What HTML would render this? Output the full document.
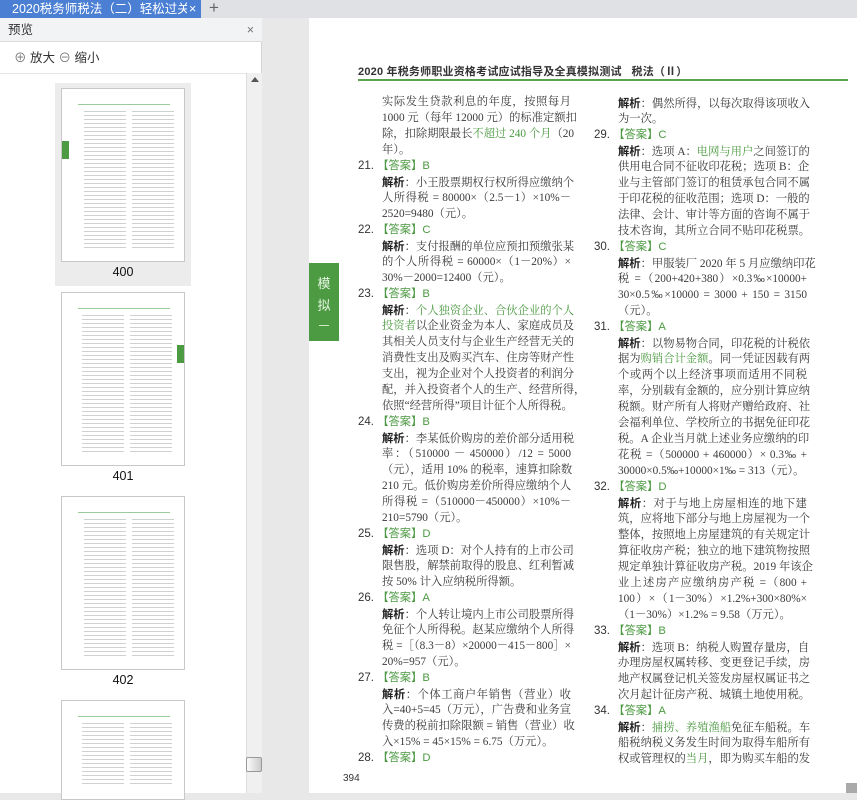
<!DOCTYPE html>
<html><head><meta charset="utf-8">
<style>
*{margin:0;padding:0;box-sizing:border-box}
body{width:857px;height:793px;overflow:hidden;position:relative;background:#e8e8e8;font-family:"Liberation Sans","Noto Sans CJK SC",sans-serif}
.abs{position:absolute}
#tabbar{left:0;top:0;width:857px;height:18px;background:#dfe1e5}
#tab{left:0;top:0;width:201px;height:18px;background:#4a7fd4;color:#fff;font-size:12.5px;line-height:18px;padding-left:12px;white-space:nowrap;overflow:hidden}
#side{left:0;top:18px;width:262px;height:775px;background:#fff;border-right:1px solid #d4d4d4}
#sh{left:0;top:0;width:262px;height:24px;background:#f2f3f5;border-bottom:1px solid #dcdcdc;font-size:12.5px;line-height:24px;padding-left:8px;color:#333}
#tb{left:0;top:24px;width:262px;height:32px;border-bottom:1px solid #e6e6e6;font-size:12.5px;color:#333;line-height:32px}
.sb{left:246px;top:73px;width:16px;height:720px;background:#f0f0f0;border-left:1px solid #ddd}
.thumb{position:absolute;left:61px;width:124px;height:174px;border:1px solid #c8c8c8;background:#fff}
.thumb .ln{position:absolute;left:16px;right:14px;top:14px;height:2px;border-bottom:1px solid #9c9;}
.thumb .c{position:absolute;top:20px;bottom:12px;width:42px;background:repeating-linear-gradient(#fff 0,#fff 2px,#d0d0d0 2px,#d0d0d0 3px,#fff 3px,#fff 4px)}
.lbl{position:absolute;left:55px;width:136px;text-align:center;font-size:12.5px;color:#111}
#page{left:309px;top:18px;width:548px;height:775px;background:#fff}
.col{position:absolute;top:94px;width:250px;font-family:"Liberation Serif","Noto Serif CJK SC",serif;font-size:11.3px;color:#3a3a3a;line-height:16px}
.col div{height:16px;white-space:nowrap}
.t{margin-left:24px;width:189px;text-align:justify;text-align-last:justify}
.s{margin-left:24px;text-align-last:auto}
.n{font-family:"Liberation Sans","Noto Sans CJK SC",sans-serif;font-size:11.5px;color:#333}
.a{color:#4c9a42;font-family:"Liberation Sans","Noto Sans CJK SC",sans-serif}
.g{color:#4c9a42}
b{font-family:"Noto Sans CJK SC",sans-serif;font-weight:bold;color:#222}
</style></head><body>
<div id="tabbar" class="abs"></div>
<div id="tab" class="abs">2020税务师税法（二）轻松过关 <span style="position:absolute;left:187px;top:0;background:#4a7fd4;padding-left:2px">×</span></div>
<div class="abs" style="left:209px;top:-2px;font-size:17px;color:#666">+</div>
<div id="side" class="abs">
 <div id="sh" class="abs">预览<span style="position:absolute;right:8px;color:#777">×</span></div>
 <div id="tb" class="abs"><span style="margin-left:14px;color:#777">⊕</span> 放大 <span style="color:#777">⊖</span> 缩小</div>
</div>
<div class="abs" style="left:55px;top:83px;width:136px;height:203px;background:#ececec"></div>
<div class="thumb" style="top:88px"><div class="ln"></div><div class="c" style="left:22px"></div><div class="c" style="left:70px"></div><div class="abs" style="left:0;top:52px;width:7px;height:18px;background:#4c9a42"></div></div>
<div class="lbl" style="top:265px">400</div>
<div class="thumb" style="top:292px"><div class="ln"></div><div class="c" style="left:20px"></div><div class="c" style="left:68px"></div><div class="abs" style="right:0;top:52px;width:7px;height:18px;background:#4c9a42"></div></div>
<div class="lbl" style="top:469px">401</div>
<div class="thumb" style="top:496px"><div class="ln"></div><div class="c" style="left:22px"></div><div class="c" style="left:70px"></div></div>
<div class="lbl" style="top:673px">402</div>
<div class="thumb" style="top:700px;height:100px"><div class="ln"></div><div class="c" style="left:20px"></div><div class="c" style="left:68px"></div></div>
<div class="abs sb"><div class="abs" style="left:4px;top:4px;border:4px solid transparent;border-bottom:5px solid #555;border-top:0"></div><div class="abs" style="left:-1px;top:684px;width:16px;height:15px;background:linear-gradient(90deg,#fafafa,#ccc);border:1px solid #999;border-radius:2px"></div></div>

<div id="page" class="abs"></div>
<div class="abs" style="left:358px;top:63px;font-size:11px;letter-spacing:0.2px;font-weight:bold;color:#333;white-space:nowrap">2020 年税务师职业资格考试应试指导及全真模拟测试&nbsp;&nbsp;&nbsp;税法（Ⅱ）</div>
<div class="abs" style="left:358px;top:79px;width:490px;height:2px;background:#5aa34d"></div>
<div class="abs" style="left:309px;top:263px;width:30px;height:78px;background:#4c9a42;color:#e8f5e4;font-size:13px;text-align:center;line-height:22px;padding-top:10px">模<br>拟<div style="height:1px;width:10px;background:#cfe8c8;margin:8px auto 0"></div></div>
<div class="abs" style="left:343px;top:773px;font-size:10px;color:#333">394</div>
<div class="abs" style="left:846px;top:783px;width:11px;height:10px;background:#aaa"></div>

<div class="col" style="left:358px">
<div class="t">实际发生贷款利息的年度，按照每月</div>
<div class="t">1000 元（每年 12000 元）的标准定额扣</div>
<div class="t">除，扣除期限最长<span class="g">不超过 240 个月</span>（20</div>
<div class="s">年）。</div>
<div><span class="n">21. </span><span class="a">【答案】B</span></div>
<div class="t"><b>解析</b>：小王股票期权行权所得应缴纳个</div>
<div class="t">人所得税 = 80000×（2.5－1）×10%－</div>
<div class="s">2520=9480（元）。</div>
<div><span class="n">22. </span><span class="a">【答案】C</span></div>
<div class="t"><b>解析</b>：支付报酬的单位应预扣预缴张某</div>
<div class="t">的个人所得税 = 60000×（1－20%）×</div>
<div class="s">30%－2000=12400（元）。</div>
<div><span class="n">23. </span><span class="a">【答案】B</span></div>
<div class="t"><b>解析</b>：<span class="g">个人独资企业、合伙企业的个人</span></div>
<div class="t"><span class="g">投资者</span>以企业资金为本人、家庭成员及</div>
<div class="t">其相关人员支付与企业生产经营无关的</div>
<div class="t">消费性支出及购买汽车、住房等财产性</div>
<div class="t">支出，视为企业对个人投资者的利润分</div>
<div class="t">配，并入投资者个人的生产、经营所得，</div>
<div class="t">依照“经营所得”项目计征个人所得税。</div>
<div><span class="n">24. </span><span class="a">【答案】B</span></div>
<div class="t"><b>解析</b>：李某低价购房的差价部分适用税</div>
<div class="t">率：（510000 － 450000）/12 = 5000</div>
<div class="t">（元），适用 10% 的税率，速算扣除数</div>
<div class="t">210 元。低价购房差价所得应缴纳个人</div>
<div class="t">所得税 =（510000－450000）×10%－</div>
<div class="s">210=5790（元）。</div>
<div><span class="n">25. </span><span class="a">【答案】D</span></div>
<div class="t"><b>解析</b>：选项 D：对个人持有的上市公司</div>
<div class="t">限售股，解禁前取得的股息、红利暂减</div>
<div class="s">按 50% 计入应纳税所得额。</div>
<div><span class="n">26. </span><span class="a">【答案】A</span></div>
<div class="t"><b>解析</b>：个人转让境内上市公司股票所得</div>
<div class="t">免征个人所得税。赵某应缴纳个人所得</div>
<div class="t">税 =［（8.3－8）×20000－415－800］×</div>
<div class="s">20%=957（元）。</div>
<div><span class="n">27. </span><span class="a">【答案】B</span></div>
<div class="t"><b>解析</b>：个体工商户年销售（营业）收</div>
<div class="t">入=40+5=45（万元），广告费和业务宣</div>
<div class="t">传费的税前扣除限额 = 销售（营业）收</div>
<div class="s">入×15% = 45×15% = 6.75（万元）。</div>
<div><span class="n">28. </span><span class="a">【答案】D</span></div>
</div>

<div class="col" style="left:594px;top:95px">
<div class="t"><b>解析</b>：偶然所得，以每次取得该项收入</div>
<div class="s">为一次。</div>
<div><span class="n">29. </span><span class="a">【答案】C</span></div>
<div class="t"><b>解析</b>：选项 A：<span class="g">电网与用户</span>之间签订的</div>
<div class="t">供用电合同不征收印花税；选项 B：企</div>
<div class="t">业与主管部门签订的租赁承包合同不属</div>
<div class="t">于印花税的征收范围；选项 D：一般的</div>
<div class="t">法律、会计、审计等方面的咨询不属于</div>
<div class="s">技术咨询，其所立合同不贴印花税票。</div>
<div><span class="n">30. </span><span class="a">【答案】C</span></div>
<div class="t"><b>解析</b>：甲服装厂 2020 年 5 月应缴纳印花</div>
<div class="t">税 =（200+420+380）×0.3‰×10000+</div>
<div class="t">30×0.5‰×10000 = 3000 + 150 = 3150</div>
<div class="s">（元）。</div>
<div><span class="n">31. </span><span class="a">【答案】A</span></div>
<div class="t"><b>解析</b>：以物易物合同，印花税的计税依</div>
<div class="t">据为<span class="g">购销合计金额</span>。同一凭证因载有两</div>
<div class="t">个或两个以上经济事项而适用不同税</div>
<div class="t">率，分别载有金额的，应分别计算应纳</div>
<div class="t">税额。财产所有人将财产赠给政府、社</div>
<div class="t">会福利单位、学校所立的书据免征印花</div>
<div class="t">税。A 企业当月就上述业务应缴纳的印</div>
<div class="t">花税 =（500000 + 460000）× 0.3‰ +</div>
<div class="s">30000×0.5‰+10000×1‰ = 313（元）。</div>
<div><span class="n">32. </span><span class="a">【答案】D</span></div>
<div class="t"><b>解析</b>：对于与地上房屋相连的地下建</div>
<div class="t">筑，应将地下部分与地上房屋视为一个</div>
<div class="t">整体，按照地上房屋建筑的有关规定计</div>
<div class="t">算征收房产税；独立的地下建筑物按照</div>
<div class="t">规定单独计算征收房产税。2019 年该企</div>
<div class="t">业上述房产应缴纳房产税 =（800 +</div>
<div class="t">100）×（1－30%）×1.2%+300×80%×</div>
<div class="s">（1－30%）×1.2% = 9.58（万元）。</div>
<div><span class="n">33. </span><span class="a">【答案】B</span></div>
<div class="t"><b>解析</b>：选项 B：纳税人购置存量房，自</div>
<div class="t">办理房屋权属转移、变更登记手续，房</div>
<div class="t">地产权属登记机关签发房屋权属证书之</div>
<div class="s">次月起计征房产税、城镇土地使用税。</div>
<div><span class="n">34. </span><span class="a">【答案】A</span></div>
<div class="t"><b>解析</b>：<span class="g">捕捞、养殖渔船</span>免征车船税。车</div>
<div class="t">船税纳税义务发生时间为取得车船所有</div>
<div class="t">权或管理权的<span class="g">当月</span>，即为购买车船的发</div>
</div>
</body></html>
